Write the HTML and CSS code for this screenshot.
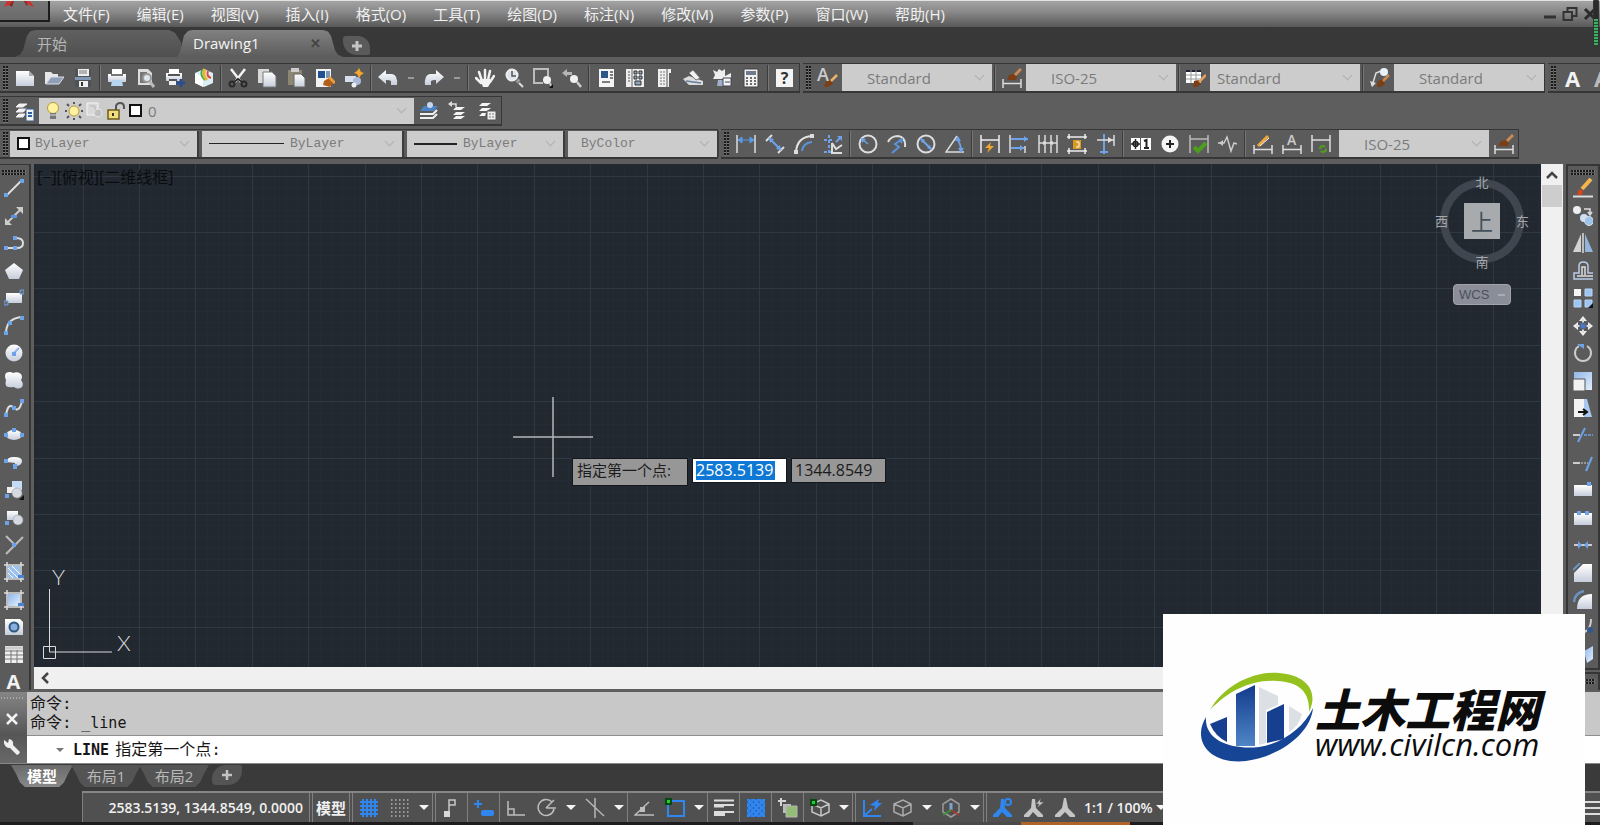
FILE: index.html
```html
<!DOCTYPE html>
<html lang="zh-CN">

<head>
    <meta charset="UTF-8">
    <meta name="viewport" content="width=device-width, initial-scale=1.0">
    <title>Drawing1</title>
    <link rel="stylesheet" href="styles.css">
</head>

<body>
    <!-- shared gradients -->
    <svg class="defs" width="0" height="0" aria-hidden="true">
        <linearGradient id="gw" x1="0" y1="0" x2="0" y2="1">
            <stop offset="0" stop-color="#ffffff" />
            <stop offset="1" stop-color="#c6cddb" />
        </linearGradient>
        <linearGradient id="gb" x1="0" y1="0" x2="1" y2="1">
            <stop offset="0" stop-color="#8fb6ea" />
            <stop offset="1" stop-color="#e3effc" />
        </linearGradient>
        <linearGradient id="tower" x1="0" y1="0" x2="0" y2="1">
            <stop offset="0" stop-color="#123a8c" />
            <stop offset="1" stop-color="#4f86c6" />
        </linearGradient>
    </svg>

    <header class="menu-bar">
        <button class="app-button" aria-label="应用程序菜单">
            <svg width="48" height="20" viewBox="0 0 48 20"><path d="M4 6L7 0H13L11 2L9 4ZM24 0H30L34 6L31 5Z" fill="#d0312d" /><path d="M9 4L13 0H14L12 6ZM24 0H26L28 5L26 4Z" fill="#8e2421" /></svg>
        </button>
        <nav class="menus">
            <a href="#">文件(F)</a>
            <a href="#">编辑(E)</a>
            <a href="#">视图(V)</a>
            <a href="#">插入(I)</a>
            <a href="#">格式(O)</a>
            <a href="#">工具(T)</a>
            <a href="#">绘图(D)</a>
            <a href="#">标注(N)</a>
            <a href="#">修改(M)</a>
            <a href="#">参数(P)</a>
            <a href="#">窗口(W)</a>
            <a href="#">帮助(H)</a>
        </nav>
        <div class="window-buttons">
            <button aria-label="最小化"><svg width="16" height="16" viewBox="0 0 16 16"><path d="M2 11H14" stroke="#333" stroke-width="3" /></svg></button>
            <button aria-label="还原"><svg width="16" height="16" viewBox="0 0 16 16"><path d="M1.500 6H10V14H1.500ZM5.500 6V2H14.500V10H10" fill="none" stroke="#333" stroke-width="2" /></svg></button>
            <button aria-label="关闭"><svg width="16" height="16" viewBox="0 0 16 16"><path d="M3 3L13 13M13 3L3 13" stroke="#2b2b2b" stroke-width="3" /></svg></button>
        </div>
        <div class="meter"></div>
    </header>

    <div class="file-tabs">
        <button class="file-tab">开始</button>
        <button class="file-tab active">Drawing1 <span class="close">✕</span></button>
        <button class="add-tab" aria-label="新图形"><svg width="12" height="12" viewBox="0 0 12 12"><path d="M6 1V11M1 6H11" stroke="#c4c4c4" stroke-width="3" /></svg></button>
    </div>

    <div class="toolbars">
        <div class="toolbar-row">
            <div class="toolbar">
                <span class="grip"></span>
                <button class="tool" aria-label="新建"><svg viewBox="0 0 20 20"><path d="M1 3H14L19 8V18H1Z" fill="url(#gw)" /><path d="M14 3V8H19" fill="#aaa" /></svg></button>
                <button class="tool" aria-label="打开"><svg viewBox="0 0 20 20"><path d="M1 4H7L9 6H14V9H7L2 16H1Z" fill="#e8e8e8" /><path d="M7 9H20L15 16H2Z" fill="#8fa0b4" stroke="#dde" /></svg></button>
                <button class="tool" aria-label="保存"><svg viewBox="0 0 20 20"><path d="M2 1H18V19H2Z" fill="#4d5258" /><path d="M5 1H16V8H5Z" fill="#eee" /><path d="M6 3H14M6 5H14" stroke="#777" /><path d="M2 9H18V12H2Z" fill="#8297b5" /><path d="M6 13H15V19H6Z" fill="#eee" /><path d="M8 14H10V18H8Z" fill="#333" /></svg></button>
                <span class="sep"></span>
                <button class="tool" aria-label="打印"><svg viewBox="0 0 20 20"><path d="M5 1H15V6H5Z" fill="#fff" /><path d="M1 6H19V14H1Z" fill="url(#gw)" /><path d="M4 7H16" stroke="#777" stroke-width="2" /><path d="M5 12H15L16 18H4Z" fill="#b5d6ee" /></svg></button>
                <button class="tool" aria-label="打印预览"><svg viewBox="0 0 20 20"><path d="M2 1H12L16 5V17H2Z" fill="#ddd" /><path d="M4 4H11V15H4Z" fill="#777" /><circle cx="11" cy="10" r="4" fill="#dfe6ee" stroke="#999" stroke-width="2" /><path d="M14 14L18 19" stroke="#bbb" stroke-width="3" /></svg></button>
                <button class="tool" aria-label="发布"><svg viewBox="0 0 20 20"><path d="M4 1H14V5H4Z" fill="#fff" /><path d="M1 5H17V13H1Z" fill="url(#gw)" /><path d="M3 7H15M4 12H12" stroke="#555" stroke-width="2" /><path d="M4 13H11V17H4Z" fill="#eee" /><path d="M16 11V19M11 15H20" stroke="#2c4d8e" stroke-width="3" /></svg></button>
                <button class="tool" aria-label="三维打印"><svg viewBox="0 0 20 20"><path d="M1 5L10 1L19 5V15L10 19L1 15Z" fill="#dceef6" /><path d="M1 5L9 9V19L1 15Z" fill="#fff" /><path d="M8 2Q6 8 11 12" fill="none" stroke="#3fae5a" stroke-width="2" /><path d="M11 1Q8 7 13 12" fill="none" stroke="#e5b832" stroke-width="3" /><path d="M14 3Q12 8 17 10" fill="none" stroke="#db4c3f" stroke-width="2" /></svg></button>
                <span class="sep"></span>
                <button class="tool" aria-label="剪切"><svg viewBox="0 0 20 20"><path d="M3 1L13 14M17 1L7 14" stroke="#f2f2f2" stroke-width="2.500" /><circle cx="4" cy="16" r="2.500" fill="none" stroke="#2a2a2a" stroke-width="2" /><circle cx="16" cy="16" r="2.500" fill="none" stroke="#2a2a2a" stroke-width="2" /><path d="M6 14L10 11L14 14" fill="none" stroke="#2a2a2a" stroke-width="2" /></svg></button>
                <button class="tool" aria-label="复制"><svg viewBox="0 0 20 20"><path d="M1 1H12V15H1Z" fill="#d9d9d9" /><path d="M6 4H15L19 8V19H6Z" fill="url(#gw)" stroke="#777" /></svg></button>
                <button class="tool" aria-label="粘贴"><svg viewBox="0 0 20 20"><path d="M2 2H16V17H2Z" fill="#8d8672" /><path d="M5 0H13V4H5Z" fill="#ccc" /><path d="M8 6H15L19 10V19H8Z" fill="url(#gw)" stroke="#666" /></svg></button>
                <button class="tool" aria-label="特性匹配"><svg viewBox="0 0 20 20"><path d="M1 1H16V19H1Z" fill="#f2f2f2" /><path d="M3 3H10V10H3Z" fill="#1f4f8f" /><path d="M11 3H15V10H11Z" fill="#7a97b8" /><path d="M9 13L14 10L19 14L15 19L8 17Z" fill="#b45d19" /><path d="M14 9L20 15" stroke="#e99f3d" stroke-width="3" /></svg></button>
                <button class="tool" aria-label="块编辑器"><svg viewBox="0 0 20 20"><path d="M1 8H12V14H1Z" fill="#d7dfee" /><circle cx="13" cy="13" r="4" fill="#aab9d8" /><circle cx="10" cy="17" r="2.500" fill="#eee" /><path d="M15 0L17 4L20 5L17 7L15 10L13 6L10 5L13 3Z" fill="#f4a82d" /></svg></button>
                <span class="sep"></span>
                <button class="tool" aria-label="放弃"><svg viewBox="0 0 20 20"><path d="M0 9L8 2V6H14Q20 7 19 17H13V13Q12 12 8 12V16Z" fill="url(#gw)" /></svg></button>
                <button class="drop" aria-label="放弃列表"></button>
                <button class="tool" aria-label="重做"><svg viewBox="0 0 20 20"><path d="M20 9L12 2V6H6Q0 7 1 17H7V13Q8 12 12 12V16Z" fill="url(#gw)" /></svg></button>
                <button class="drop" aria-label="重做列表"></button>
                <span class="sep"></span>
                <button class="tool" aria-label="平移"><svg viewBox="0 0 20 20"><path d="M7 13L4 4M10 12V2M13 12L15 3M15 14L19 8M6 15L1 10" stroke="#f2f2f2" stroke-width="2.500" stroke-linecap="round" /><path d="M5 11H15L16 14L13 19H8Z" fill="#f2f2f2" /></svg></button>
                <button class="tool" aria-label="实时缩放"><svg viewBox="0 0 20 20"><circle cx="8" cy="7" r="5.500" fill="#dce3ea" stroke="#eee" stroke-width="2" /><path d="M8 3V8H12" fill="none" stroke="#555" stroke-width="1.500" /><path d="M13 12L15 14" stroke="#999" stroke-width="4" /><path d="M15 15L19 19" stroke="#ddd" stroke-width="2" /></svg></button>
                <button class="tool" aria-label="窗口缩放"><svg viewBox="0 0 20 20"><path d="M10 15H1V1H15V8" fill="none" stroke="#bcbcbc" stroke-width="2" /><circle cx="14" cy="12" r="4" fill="#f0f0f0" /><path d="M17 15L18 18" stroke="#ccc" stroke-width="2" /><path d="M20 16V20H16Z" fill="#111" /></svg></button>
                <button class="tool" aria-label="缩放上一个"><svg viewBox="0 0 20 20"><path d="M0 5L5 1V4H10V7H5V9Z" fill="#b5b5b5" /><circle cx="12" cy="11" r="4" fill="#f0f0f0" /><path d="M15 14L19 19" stroke="#ccc" stroke-width="2.500" /></svg></button>
                <span class="sep"></span>
                <button class="tool" aria-label="特性"><svg viewBox="0 0 20 20"><path d="M3 1H18V19H3Z" fill="#f4f4f4" /><path d="M5 3H12V10H5Z" fill="#2d5688" /><path d="M14 4H17M14 7H17M14 10H17M6 14H14" stroke="#555" stroke-width="1.500" /></svg></button>
                <button class="tool" aria-label="设计中心"><svg viewBox="0 0 20 20"><path d="M1 1H19V19H1Z" fill="#eee" /><path d="M7 1V19" stroke="#666" /><path d="M3 4H5M3 7H5M3 10H5M3 13H5" stroke="#555" /><path d="M9 3H12V6H9ZM14 3H17V6H14ZM9 8H12V11H9ZM14 8H17V11H14ZM10 13H16V17H10Z" fill="#8fa3bf" stroke="#333" /></svg></button>
                <button class="tool" aria-label="工具选项板"><svg viewBox="0 0 20 20"><path d="M4 1H17V5H15V19H4Z" fill="#f0f0f0" /><path d="M13 1V19" stroke="#555" /><path d="M6 4H11M6 7H11M6 10H11M6 13H11M6 16H11" stroke="#777" stroke-dasharray="2 1" /></svg></button>
                <button class="tool" aria-label="图纸集"><svg viewBox="0 0 20 20"><path d="M0 11L6 8L20 13V17H6Z" fill="#dcdcdc" /><path d="M6 5L10 2L17 10L13 12Z" fill="#f4f4f4" stroke="#777" /><path d="M3 13L18 15" stroke="#667f9e" stroke-width="1.500" /></svg></button>
                <button class="tool" aria-label="标记集"><svg viewBox="0 0 20 20"><path d="M1 2L5 4L7 1L10 3L13 1V8L19 5V11H1L3 7Z" fill="#eee" /><path d="M6 12H11V18H5Z" fill="#9fb0c8" /><path d="M11 10H19V18H11Z" fill="#f4f4f4" stroke="#445" /><path d="M13 14H18" stroke="#445" /></svg></button>
                <button class="tool" aria-label="计算器"><svg viewBox="0 0 20 20"><path d="M3 1H17V19H3Z" fill="#f2f2f2" stroke="#444" /><path d="M5 3H15V7H5Z" fill="#6d7b8c" /><path d="M5 10H15M5 13H15M5 16H15" stroke="#444" stroke-width="1.500" stroke-dasharray="2 2" /></svg></button>
                <span class="sep"></span>
                <button class="tool help" aria-label="帮助"><span>?</span></button>
            </div>
            <div class="toolbar">
                <span class="grip"></span>
                <button class="tool letter-a" aria-label="文字样式"><span>A</span><svg viewBox="0 0 20 20"><path d="M6 19L8 13L13 12L15 16L10 19Z" fill="#7b3f17" /><path d="M13 13L19 7" stroke="#e8b36a" stroke-width="2.500" /></svg></button>
                <label class="combo style-combo"><select aria-label="文字样式列表"><option>Standard</option></select></label>
                <span class="sep"></span>
                <button class="tool" aria-label="标注样式"><svg viewBox="0 0 20 20"><path d="M1 11V20M19 11V20M1 15.500H19" stroke="#ddd" stroke-width="1.500" /><path d="M5 12L7 7L12 6L15 9L14 12Z" fill="#7b3f17" /><path d="M13 7L19 1" stroke="#c98a54" stroke-width="3" /></svg></button>
                <label class="combo style-combo"><select aria-label="标注样式列表"><option>ISO-25</option></select></label>
                <span class="sep"></span>
                <button class="tool" aria-label="表格样式"><svg viewBox="0 0 20 20"><path d="M0 2H15V15H0Z" fill="#fff" /><path d="M0 3H15" stroke="#223" stroke-width="2" /><path d="M0 7H15M0 11H15M5 2V15M10 2V15" stroke="#999" /><path d="M7 19L8 13L13 12L15 16L11 19Z" fill="#7b3f17" /><path d="M13 14L20 7" stroke="#e2a264" stroke-width="2.500" /></svg></button>
                <label class="combo style-combo near"><select aria-label="表格样式列表"><option>Standard</option></select></label>
                <span class="sep"></span>
                <button class="tool" aria-label="多重引线样式"><svg viewBox="0 0 20 20"><path d="M2 18L6 5L11 3" fill="none" stroke="#ddd" stroke-width="1.500" /><path d="M0 13L2 19L6 15Z" fill="#ddd" /><circle cx="14" cy="4" r="4" fill="#e8f2fa" /><path d="M7 19L8 13L13 11L15 16L11 19Z" fill="#7b3f17" /><path d="M13 13L19 7" stroke="#c98a54" stroke-width="2.500" /></svg></button>
                <label class="combo style-combo"><select aria-label="引线样式列表"><option>Standard</option></select></label>
            </div>
            <div class="toolbar clipped">
                <span class="grip"></span>
                <button class="tool big-a" aria-label="多行文字">A</button>
                <button class="tool big-a dim" aria-label="单行文字">A</button>
            </div>
        </div>

        <div class="toolbar-row">
            <div class="toolbar">
                <span class="grip"></span>
                <button class="tool" aria-label="图层特性"><svg viewBox="0 0 20 20"><path d="M4 3H12L8 6H1ZM4 8H12L8 11H1ZM4 13H10L8 16H1Z" fill="#f4f4f4" stroke="#eee" /><path d="M11 8H19V20H11Z" fill="#f2f2f2" stroke="#345c92" /><path d="M13 12H17M13 15H17" stroke="#2d5fa8" stroke-width="2" /></svg></button>
                <label class="combo layer-combo">
                    <svg viewBox="0 0 20 20"><circle cx="10" cy="7" r="5.500" fill="#fff3a0" stroke="#b79b2e" /><path d="M7 12H13V18H7Z" fill="#777" /><path d="M7 14H13" stroke="#ddd" /></svg>
                    <svg viewBox="0 0 20 20"><circle cx="10" cy="10" r="5" fill="#fff0a0" stroke="#b99a37" /><path d="M10 1V3M10 17V19M1 10H3M17 10H19M3 3L5 5M15 15L17 17M17 3L15 5M5 15L3 17" stroke="#555" stroke-width="2" /></svg>
                    <svg viewBox="0 0 20 20"><path d="M2 2H13V14H2Z" fill="#d8d8d8" stroke="#f4f4f4" /><circle cx="13" cy="12" r="4" fill="#c0c0c0" stroke="#e4e4e4" /><path d="M5 5H10V9" fill="none" stroke="#b4b4b4" /></svg>
                    <svg viewBox="0 0 20 20"><path d="M2 9H13V18H2Z" fill="#f2dc7c" stroke="#6d5c1d" stroke-width="1.500" /><path d="M10 9V5Q11 2 14 2Q18 2 18 6V8" fill="none" stroke="#555" stroke-width="2" /><path d="M7 12V15" stroke="#333" stroke-width="2" /></svg>
                    <span class="swatch"></span>
                    <select aria-label="图层"><option>0</option></select>
                </label>
                <button class="tool" aria-label="将对象的图层置为当前"><svg viewBox="0 0 20 20"><path d="M5 5H19L15 10H1Z" fill="#4b83c4" /><circle cx="11" cy="4" r="3" fill="#c8d8ec" /><path d="M1 13H14L18 9M1 17H14L18 13" fill="none" stroke="#f0f0f0" stroke-width="2" /></svg></button>
                <button class="tool" aria-label="上一个图层"><svg viewBox="0 0 20 20"><path d="M1 3H8V6" fill="none" stroke="#ddd" stroke-width="1.500" /><path d="M0 3L4 0V6Z" fill="#ddd" /><path d="M8 6H17L13 9H5ZM8 11H17L13 14H5ZM8 15H17L13 18H5Z" fill="#f4f4f4" /></svg></button>
                <button class="tool" aria-label="图层状态"><svg viewBox="0 0 20 20"><path d="M5 2H14L10 5H2ZM5 7H14L10 10H2ZM5 12H9L8 15H2Z" fill="#f4f4f4" /><path d="M10 10H19V19H10Z" fill="#eee" stroke="#555" /><path d="M12 13H17M12 16H17" stroke="#777" stroke-dasharray="2 1" /></svg></button>
            </div>
        </div>

        <div class="toolbar-row">
            <div class="toolbar prop-bar">
                <span class="grip"></span>
                <label class="combo mono color-combo"><span class="swatch"></span><select aria-label="颜色"><option>ByLayer</option></select></label>
                <label class="combo mono type-combo"><span class="line"></span><select aria-label="线型"><option>ByLayer</option></select></label>
                <label class="combo mono weight-combo"><span class="line thick"></span><select aria-label="线宽"><option>ByLayer</option></select></label>
                <label class="combo mono plot-combo"><select aria-label="打印样式"><option>ByColor</option></select></label>
            </div>
            <div class="toolbar dim-bar">
                <span class="grip"></span>
                <button class="tool" aria-label="线性"><svg viewBox="0 0 20 20"><path d="M1 1V19M19 1V19" stroke="#ddd" stroke-width="1.500" /><path d="M2 6H18M2 6L6 3V9ZM18 6L14 3V9Z" fill="#5b9be8" stroke="#5b9be8" /></svg></button>
                <button class="tool" aria-label="对齐"><svg viewBox="0 0 20 20"><path d="M1 7L7 1M13 19L19 13" stroke="#ddd" stroke-width="2" /><path d="M4 4L16 16" stroke="#6ea3ea" stroke-width="2" /><path d="M4 4L9 5L5 9ZM16 16L11 15L15 11Z" fill="#6ea3ea" /></svg></button>
                <button class="tool" aria-label="弧长"><svg viewBox="0 0 20 20"><path d="M2 18Q3 3 18 2" fill="none" stroke="#e5e5e5" stroke-width="2" /><path d="M8 17Q9 9 18 8" fill="none" stroke="#5b93e0" stroke-width="2" /><path d="M0 16H4V20H0ZM16 0H20V4H16Z" fill="#ddd" /></svg></button>
                <button class="tool" aria-label="坐标"><svg viewBox="0 0 20 20"><path d="M1 6H10M6 1V19M1 18H10" stroke="#6ea3ea" stroke-width="2" stroke-dasharray="3 2" /><path d="M9 9V19H19M9 9L13 15L19 11" fill="none" stroke="#ddd" stroke-width="2" /><path d="M14 2H19V7Z" fill="#6ea3ea" /><path d="M13 8L18 3" stroke="#6ea3ea" stroke-width="2" /></svg></button>
                <span class="sep"></span>
                <button class="tool" aria-label="半径"><svg viewBox="0 0 20 20"><circle cx="10" cy="10" r="8.500" fill="none" stroke="#ddd" stroke-width="2" /><path d="M10 10L4 5" stroke="#6ea3ea" stroke-width="1.500" /><path d="M3 4L8 5L4 9Z" fill="#6ea3ea" /></svg></button>
                <button class="tool" aria-label="折弯"><svg viewBox="0 0 20 20"><path d="M1 8Q4 2 11 2Q19 3 18 13" fill="none" stroke="#ddd" stroke-width="2" /><path d="M5 19L12 13L8 10L14 6" fill="none" stroke="#5b93e0" stroke-width="2" /><path d="M16 4L15 10L11 6Z" fill="#5b93e0" /></svg></button>
                <button class="tool" aria-label="直径"><svg viewBox="0 0 20 20"><circle cx="10" cy="10" r="8.500" fill="none" stroke="#ddd" stroke-width="2" /><path d="M5 5L15 15" stroke="#6ea3ea" stroke-width="2" /><path d="M4 4L9 6L6 9ZM16 16L11 14L14 11Z" fill="#6ea3ea" /></svg></button>
                <button class="tool" aria-label="角度"><svg viewBox="0 0 20 20"><path d="M12 2L1 18H19" fill="none" stroke="#ddd" stroke-width="1.500" /><path d="M12 5Q16 10 16 17" fill="none" stroke="#6ea3ea" stroke-width="2" /><path d="M10 7L13 2L16 7ZM13 14H19L16 19Z" fill="#6ea3ea" /></svg></button>
                <span class="sep"></span>
                <button class="tool" aria-label="快速标注"><svg viewBox="0 0 20 20"><path d="M1 1V19M19 1V19M1 6H19" stroke="#eee" stroke-width="1.500" /><path d="M11 8L5 14H9L7 19L14 12H10Z" fill="#f3a42c" /></svg></button>
                <button class="tool" aria-label="基线"><svg viewBox="0 0 20 20"><path d="M1 1V19M16 12V19" stroke="#ddd" stroke-width="1.500" /><path d="M2 5H19M2 14H15" stroke="#6ea3ea" stroke-width="2" /><path d="M19 5L15 2V8ZM15 14L11 11V17Z" fill="#6ea3ea" /></svg></button>
                <button class="tool" aria-label="连续"><svg viewBox="0 0 20 20"><path d="M1 1V19M7 1V19M13 1V19M19 1V19M1 9H19" stroke="#ddd" stroke-width="1.500" /><path d="M5 7L9 9L5 11ZM11 9L15 7V11Z" fill="#ddd" /></svg></button>
                <button class="tool" aria-label="等距标注"><svg viewBox="0 0 20 20"><path d="M0 3H20M0 17H20M2 0V5M18 0V5M2 14V20M18 14V20" stroke="#eee" stroke-width="1.500" /><path d="M6 6H14V15H6Z" fill="#d99a1e" /><path d="M9 8H12V13H9" fill="none" stroke="#fff" /></svg></button>
                <button class="tool" aria-label="折断标注"><svg viewBox="0 0 20 20"><path d="M8 0V20M4 18H12" stroke="#6ea3ea" stroke-width="2" /><path d="M1 6H18M18 1V12" stroke="#ddd" stroke-width="1.500" /><path d="M17 6L12 3V9Z" fill="#ddd" /></svg></button>
                <span class="sep"></span>
                <button class="tool" aria-label="公差"><svg viewBox="0 0 20 20"><path d="M0 4H9V16H0ZM10 4H20V16H10Z" fill="#fff" /><path d="M4.500 5V15M0 10H9M2 10A2.500 2.500 0 1 0 7 10A2.500 2.500 0 1 0 2 10" fill="none" stroke="#222" stroke-width="1.500" /><path d="M13 7L15.500 6V14M13 14H18" fill="none" stroke="#222" stroke-width="2" /></svg></button>
                <button class="tool" aria-label="圆心标记"><svg viewBox="0 0 20 20"><circle cx="10" cy="10" r="8.500" fill="#f4f4f4" /><path d="M10 6V14M6 10H14" stroke="#222" stroke-width="2" /></svg></button>
                <button class="tool" aria-label="检验"><svg viewBox="0 0 20 20"><path d="M1 1V19M19 1V19M1 5H19" stroke="#bbb" stroke-width="1.500" /><path d="M5 13L9 17L17 9" fill="none" stroke="#4d9e1c" stroke-width="4" /></svg></button>
                <button class="tool" aria-label="折弯线性"><svg viewBox="0 0 20 20"><path d="M0 9H6L9 3L13 17L16 9L19 10" fill="none" stroke="#ccc" stroke-width="1.500" /><path d="M1 9L5 6V12Z" fill="#ccc" /></svg></button>
                <span class="sep"></span>
                <button class="tool" aria-label="编辑标注"><svg viewBox="0 0 20 20"><path d="M1 11V20M19 11V20M1 15.500H19" stroke="#ddd" stroke-width="1.500" /><path d="M5 12L15 2" stroke="#f0a63c" stroke-width="3" /><path d="M7 12L16 4" stroke="#fff" /></svg></button>
                <button class="tool letter-dim" aria-label="编辑标注文字"><span>A</span><svg viewBox="0 0 20 20"><path d="M1 11V20M19 11V20M1 15.500H19" stroke="#ddd" stroke-width="1.500" /></svg></button>
                <button class="tool" aria-label="标注更新"><svg viewBox="0 0 20 20"><path d="M1 1V18M19 1V18M1 6H19" stroke="#ddd" stroke-width="1.500" /><circle cx="12" cy="15" r="3" fill="none" stroke="#4d9e1c" stroke-width="2" stroke-dasharray="7 2" /></svg></button>
                <label class="combo style-combo"><select aria-label="标注样式控制"><option>ISO-25</option></select></label>
                <button class="tool" aria-label="标注样式管理"><svg viewBox="0 0 20 20"><path d="M1 11V20M19 11V20M1 15.500H19" stroke="#ddd" stroke-width="1.500" /><path d="M4 12L7 7L12 6L15 9L14 12Z" fill="#7b3f17" /><path d="M13 7L19 1" stroke="#c98a54" stroke-width="3" /></svg></button>
            </div>
        </div>
    </div>

    <main class="workspace">
        <div class="side-bar draw-bar">
            <span class="grip-h"></span>
            <button class="tool" aria-label="直线"><svg viewBox="0 0 20 20"><path d="M3 17L17 3" stroke="#ddd" stroke-width="2" /><path d="M0 15H4V19H0ZM16 1H20V5H16Z" fill="#6ea3ea" /></svg></button>
            <button class="tool" aria-label="构造线"><svg viewBox="0 0 20 20"><path d="M3 17L17 3" stroke="#ccc" stroke-width="2" /><path d="M1 19V12L8 19ZM19 1H12L19 8Z" fill="#ccc" /><path d="M7 9H13V12H7Z" fill="#5b93e0" /></svg></button>
            <button class="tool" aria-label="多段线"><svg viewBox="0 0 20 20"><path d="M2 15H13Q19 15 19 10Q19 5 12 5" fill="none" stroke="#ddd" stroke-width="2" /><path d="M0 13H4V17H0ZM9 13H13V17H9ZM9 3H13V7H9Z" fill="#6ea3ea" /></svg></button>
            <button class="tool" aria-label="多边形"><svg viewBox="0 0 20 20"><path d="M10 2L19 9L15 18H5L1 9Z" fill="url(#gw)" /></svg></button>
            <button class="tool" aria-label="矩形"><svg viewBox="0 0 20 20"><path d="M2 5H18V15H2Z" fill="url(#gw)" /><path d="M0 13H4V17H0ZM16 2H20V6H16Z" fill="#6b6b6b" stroke="#6ea3ea" /></svg></button>
            <button class="tool" aria-label="圆弧"><svg viewBox="0 0 20 20"><path d="M2 17Q3 3 18 2" fill="none" stroke="#ddd" stroke-width="2" /><path d="M0 16H4V20H0ZM4 6H8V10H4ZM16 1H20V5H16Z" fill="#6ea3ea" /></svg></button>
            <button class="tool" aria-label="圆"><svg viewBox="0 0 20 20"><circle cx="10" cy="10" r="8.500" fill="url(#gw)" /><path d="M9 11L15 5" stroke="#8db6ee" stroke-width="2" /><path d="M8 9H12V13H8Z" fill="#6ea3ea" /></svg></button>
            <button class="tool" aria-label="修订云线"><svg viewBox="0 0 20 20"><path d="M2 3Q6 1 9 3Q14 1 17 4Q19 7 17 10Q20 14 18 17Q14 20 10 17Q5 18 2 16Q1 13 2 10Q0 6 2 3Z" fill="url(#gw)" /></svg></button>
            <button class="tool" aria-label="样条曲线"><svg viewBox="0 0 20 20"><path d="M2 17Q4 5 9 9Q15 16 18 3" fill="none" stroke="#ddd" stroke-width="2" /><path d="M0 15H4V19H0ZM8 8H12V12H8ZM16 1H20V5H16Z" fill="#6ea3ea" /></svg></button>
            <button class="tool" aria-label="椭圆"><svg viewBox="0 0 20 20"><ellipse cx="10" cy="10" rx="8" ry="5" fill="url(#gw)" /><path d="M0 8H4V12H0ZM16 8H20V12H16ZM8 3H12V7H8Z" fill="#6ea3ea" /></svg></button>
            <button class="tool" aria-label="椭圆弧"><svg viewBox="0 0 20 20"><path d="M2 10Q3 5 10 5Q18 5 18 9Q18 14 11 14V11Z" fill="url(#gw)" /><path d="M0 7H4V11H0ZM9 12H13V17H9Z" fill="#6ea3ea" /></svg></button>
            <button class="tool" aria-label="插入块"><svg viewBox="0 0 20 20"><path d="M8 1H18V10H8Z" fill="#c5daf4" /><path d="M3 7H11V13H3Z" fill="#eee" /><circle cx="13" cy="13" r="5" fill="#d6dae0" stroke="#8a93a2" stroke-width=".5" /><path d="M1 14H5V18H1Z" fill="#6ea3ea" /><path d="M20 15V20H15Z" fill="#111" /></svg></button>
            <button class="tool" aria-label="创建块"><svg viewBox="0 0 20 20"><path d="M3 4H14V13H3Z" fill="url(#gw)" /><circle cx="14" cy="13" r="5" fill="#d6dae0" stroke="#8a93a2" stroke-width=".5" /><path d="M1 14H5V18H1Z" fill="#6ea3ea" /></svg></button>
            <button class="tool" aria-label="点"><svg viewBox="0 0 20 20"><path d="M2 1L11 10M19 2L2 19" stroke="#bcbcbc" stroke-width="2" /><path d="M8 8H12V12H8Z" fill="#6ea3ea" /></svg></button>
            <button class="tool" aria-label="图案填充"><svg viewBox="0 0 20 20"><path d="M4 4H16V16H4Z" fill="#9cc2f0" /><path d="M4 6L14 16M4 11L9 16M8 4L16 12" stroke="#fff" /><path d="M0 3H20M0 17H20M3 0V20M17 0V20" stroke="#ddd" stroke-width="1.500" /><path d="M14 13H20V16H14Z" fill="#4b83d4" /></svg></button>
            <button class="tool" aria-label="渐变色"><svg viewBox="0 0 20 20"><path d="M4 4H16V16H4Z" fill="url(#gb)" /><path d="M0 3H20M0 17H20M3 0V20M17 0V20" stroke="#ddd" stroke-width="1.500" /><path d="M14 13H20V16H14Z" fill="#4b83d4" /></svg></button>
            <button class="tool" aria-label="面域"><svg viewBox="0 0 20 20"><path d="M1 2H16L19 5V18H1Z" fill="url(#gw)" /><circle cx="10" cy="10" r="4.500" fill="#87aede" stroke="#31577f" stroke-width="2" /></svg></button>
            <button class="tool" aria-label="表格"><svg viewBox="0 0 20 20"><path d="M1 2H19V19H1Z" fill="#eee" /><path d="M1 4H19" stroke="#ccc" stroke-width="3" /><path d="M1 7H19M1 11H19M1 15H19M7 6V19M13 6V19" stroke="#777" /></svg></button>
            <button class="tool big-a" aria-label="多行文字">A</button>
        </div>

        <div class="drawing">
            <div class="canvas">
                <svg class="grid" width="100%" height="100%" aria-hidden="true">
                    <pattern id="grid" x="105" y="68" width="282" height="282" patternUnits="userSpaceOnUse">
                        <path d="M11.500 0V282M23.500 0V282M34.500 0V282M45.500 0V282M68.500 0V282M79.500 0V282M90.500 0V282M102.500 0V282M124.500 0V282M135.500 0V282M147.500 0V282M158.500 0V282M181.500 0V282M192.500 0V282M203.500 0V282M215.500 0V282M237.500 0V282M248.500 0V282M260.500 0V282M271.500 0V282" stroke="#242b34" />
                        <path d="M0 11.500H282M0 23.500H282M0 34.500H282M0 45.500H282M0 68.500H282M0 79.500H282M0 90.500H282M0 102.500H282M0 124.500H282M0 135.500H282M0 147.500H282M0 158.500H282M0 181.500H282M0 192.500H282M0 203.500H282M0 215.500H282M0 237.500H282M0 248.500H282M0 260.500H282M0 271.500H282" stroke="#242b34" />
                        <path d="M.5 0V282M56.500 0V282M113.500 0V282M169.500 0V282M226.500 0V282M0 .5H282M0 56.500H282M0 113.500H282M0 169.500H282M0 226.500H282" stroke="#2f3943" />
                    </pattern>
                    <rect width="100%" height="100%" fill="url(#grid)" />
                </svg>
                <div class="view-label">[−][俯视][二维线框]</div>

                <svg class="ucs" width="110" height="110" viewBox="0 0 110 110">
                    <path d="M15.500 32V95H78M9.500 89.500H21.500V101.500H9.500Z" fill="none" stroke="#d8dade" stroke-width="1" />
                    <text x="18" y="28">Y</text>
                    <text x="83" y="94">X</text>
                </svg>

                <svg class="crosshair" width="82" height="82" viewBox="0 0 82 82"><path d="M41 1V81M1 41H81" stroke="#b3b7bb" stroke-width="1.500" /></svg>

                <div class="dynamic-input">
                    <label class="prompt" for="pointX">指定第一个点:</label>
                    <div class="field current"><input type="text" id="pointX" value="2583.5139"></div>
                    <div class="field"><input type="text" id="pointY" value="1344.8549" aria-label="Y 坐标"></div>
                </div>

                <div class="view-cube">
                    <span class="north">北</span>
                    <span class="west">西</span>
                    <button class="face">上</button>
                    <span class="east">东</span>
                    <span class="south">南</span>
                </div>
                <button class="wcs">WCS<span></span></button>
            </div>
            <div class="scroll-y">
                <button aria-label="向上滚动"><svg width="12" height="8" viewBox="0 0 12 8"><path d="M1 7L6 2L11 7" fill="none" stroke="#444" stroke-width="2.500" /></svg></button>
                <span class="thumb"></span>
            </div>
            <div class="scroll-x">
                <button aria-label="向左滚动"><svg width="8" height="12" viewBox="0 0 8 12"><path d="M7 1L2 6L7 11" fill="none" stroke="#444" stroke-width="2.500" /></svg></button>
            </div>
        </div>

        <div class="right-bars">
            <div class="side-bar modify-bar">
                <span class="grip-h"></span>
                <button class="tool" aria-label="删除"><svg viewBox="0 0 20 20"><path d="M0 18.500H20" stroke="#ddd" stroke-width="2" /><path d="M9 11L18 1" stroke="#f3b64a" stroke-width="4" /><path d="M4 17L6 11L10 13L9 17Z" fill="#d9441e" /></svg></button>
                <button class="tool" aria-label="复制对象"><svg viewBox="0 0 20 20"><circle cx="4" cy="4" r="4" fill="#eee" /><circle cx="11" cy="12" r="4" fill="#cfe0f5" /><circle cx="16" cy="15" r="4.500" fill="#9fc3ef" stroke="#ddd" /><path d="M11 3H17V7M15 6L17 9L19 6" fill="none" stroke="#ddd" stroke-width="1.500" /></svg></button>
                <button class="tool" aria-label="镜像"><svg viewBox="0 0 20 20"><path d="M0 19L8 1V19Z" fill="#d2d2d2" /><path d="M20 19L12 1V19Z" fill="#94b4dc" /><path d="M10 0V20" stroke="#ddd" stroke-width="1.500" /></svg></button>
                <button class="tool" aria-label="偏移"><svg viewBox="0 0 20 20"><path d="M20 18H1V12H6V5Q6 1 10 1Q15 1 15 5V12H20" fill="none" stroke="#b9cdea" stroke-width="1.500" /><path d="M20 15H4M9 14V6H12V14" fill="none" stroke="#ddd" stroke-width="1.500" /></svg></button>
                <button class="tool" aria-label="阵列"><svg viewBox="0 0 20 20"><path d="M1 1H8V8H1Z" fill="#f4f4f4" /><path d="M12 1H19V8H12ZM1 12H8V19H1ZM12 12H19V19H12Z" fill="#9cc5f2" stroke="#b8d4f4" /><path d="M20 15V20H15Z" fill="#111" /></svg></button>
                <button class="tool" aria-label="移动"><svg viewBox="0 0 20 20"><path d="M10 0L14 5H6ZM10 20L14 15H6ZM0 10L5 6V14ZM20 10L15 6V14Z" fill="#eee" /><path d="M10 3V17M3 10H17" stroke="#ddd" stroke-width="2" /><path d="M7 7H13V13H7Z" fill="#4b78c8" stroke="#555" /></svg></button>
                <button class="tool" aria-label="旋转"><svg viewBox="0 0 20 20"><path d="M14 3A8 8 0 1 1 6 3" fill="none" stroke="#ccc" stroke-width="2" /><path d="M4 1H11V6Z" fill="#6ea3ea" /></svg></button>
                <button class="tool" aria-label="缩放"><svg viewBox="0 0 20 20"><path d="M1 1H19V19H1Z" fill="url(#gb)" /><path d="M0 8H12V20H0Z" fill="#f2f2f2" stroke="#555" /></svg></button>
                <button class="tool" aria-label="拉伸"><svg viewBox="0 0 20 20"><path d="M11 1H14L19 19H11Z" fill="#a9c8ee" /><path d="M1 1H11V19H1Z" fill="#f4f4f4" /><path d="M5 14H13M10 11L14 14L10 17" fill="none" stroke="#111" stroke-width="2" /></svg></button>
                <button class="tool" aria-label="修剪"><svg viewBox="0 0 20 20"><path d="M0 10H7" stroke="#ccc" stroke-width="2" /><path d="M11 10H20" stroke="#6b8fc4" stroke-width="2" stroke-dasharray="3 1" /><path d="M5 17L12 3" stroke="#6ea3ea" stroke-width="2" /></svg></button>
                <button class="tool" aria-label="延伸"><svg viewBox="0 0 20 20"><path d="M0 10H7" stroke="#ccc" stroke-width="2" /><path d="M8 10H15" stroke="#aaa" stroke-width="1.500" stroke-dasharray="2 1" /><path d="M13 18L19 4" stroke="#6ea3ea" stroke-width="2" /></svg></button>
                <button class="tool" aria-label="打断于点"><svg viewBox="0 0 20 20"><path d="M1 5H19V16H1Z" fill="url(#gw)" /><path d="M14 2H18V6H14Z" fill="#6ea3ea" /></svg></button>
                <button class="tool" aria-label="打断"><svg viewBox="0 0 20 20"><path d="M1 5H19V17H1Z" fill="url(#gw)" /><path d="M4 3H8V7H4ZM12 3H16V7H12Z" fill="#6ea3ea" /></svg></button>
                <button class="tool" aria-label="合并"><svg viewBox="0 0 20 20"><path d="M1 10H19" stroke="#ccc" stroke-width="2" /><path d="M9 10L5 6V14ZM11 10L15 6V14Z" fill="#6ea3ea" /></svg></button>
                <button class="tool" aria-label="倒角"><svg viewBox="0 0 20 20"><path d="M1 19V10L10 1H19V19Z" fill="url(#gw)" /><path d="M0 7L7 0" stroke="#6c93c6" stroke-width="2" /></svg></button>
                <button class="tool" aria-label="圆角"><svg viewBox="0 0 20 20"><path d="M4 19Q4 4 19 4V19Z" fill="url(#gw)" /><path d="M1 12Q2 3 11 1" fill="none" stroke="#6c93c6" stroke-width="2.500" /></svg></button>
                <button class="tool" aria-label="光顺曲线"><svg viewBox="0 0 20 20"><path d="M2 16Q18 18 18 2" fill="none" stroke="#ccc" stroke-width="2" /><circle cx="17" cy="13" r="3" fill="#31578f" /></svg></button>
                <button class="tool" aria-label="分解"><svg viewBox="0 0 20 20"><path d="M11 6L20 1V14L14 18Z" fill="url(#gb)" /><path d="M2 4H12V15H2Z" fill="#d5e3f6" /></svg></button>
            </div>
            <div class="side-bar next-bar"><span class="grip-h"></span></div>
        </div>
    </main>

    <section class="command">
        <div class="command-handle">
            <span class="dots"></span>
            <button aria-label="关闭命令行"><svg width="12" height="12" viewBox="0 0 12 12"><path d="M1 1L11 11M11 1L1 11" stroke="#f2f2f2" stroke-width="2.500" /></svg></button>
            <button aria-label="自定义"><svg width="18" height="18" viewBox="0 0 18 18"><path d="M1 2L5 5L6 1Q11 2 10 7L17 14Q16 17 14 17L7 10Q2 10 1 5Z" fill="#efefef" /></svg></button>
        </div>
        <div class="command-body">
            <div class="history">
                <div>命令:</div>
                <div>命令: <span class="latin">_line</span></div>
            </div>
            <div class="command-line">
                <button class="recent" aria-label="最近使用的命令"></button>
                <label for="commandInput"><b class="latin">LINE</b>指定第一个点:</label>
                <input type="text" id="commandInput">
            </div>
        </div>
    </section>

    <div class="layout-tabs">
        <button class="layout-tab active">模型</button>
        <button class="layout-tab">布局1</button>
        <button class="layout-tab">布局2</button>
        <button class="layout-tab add" aria-label="新建布局"><svg width="12" height="12" viewBox="0 0 12 12"><path d="M6 1V11M1 6H11" stroke="#c4c4c4" stroke-width="2.500" /></svg></button>
    </div>

    <footer class="status-bar">
        <div class="status-group coords">2583.5139, 1344.8549, 0.0000</div>
        <div class="status-group"><button class="model">模型</button></div>
        <div class="status-group">
            <button class="stat" aria-label="栅格"><svg viewBox="0 0 20 20"><path d="M1 4H19M1 8H19M1 12H19M1 16H19M4 1V19M8 1V19M12 1V19M16 1V19" stroke="#2f86ef" stroke-width="2" /></svg></button>
            <button class="stat" aria-label="捕捉"><svg viewBox="0 0 20 20"><path d="M1 2H19M1 6H19M1 10H19M1 14H19M1 18H19" stroke="#b5b5b5" stroke-width="1.500" stroke-dasharray="1.500 2.500" /></svg></button>
            <button class="stat-drop" aria-label="捕捉选项"></button>
        </div>
        <div class="status-group">
            <button class="stat" aria-label="推断约束"><svg viewBox="0 0 20 20"><path d="M2 13H8V19H2Z" fill="#d8d8d8" /><path d="M7 13V2H13V7H7" fill="none" stroke="#c8c8c8" stroke-width="1.500" /></svg></button>
            <button class="stat div" aria-label="动态输入"><svg viewBox="0 0 20 20"><path d="M4 2V10M0 6H8" stroke="#2f86ef" stroke-width="2" /><rect x="7" y="12" width="13" height="6" rx="2" fill="#2f86ef" /></svg></button>
            <button class="stat div" aria-label="正交"><svg viewBox="0 0 20 20"><path d="M2 3V17H19M2 11H8V17" fill="none" stroke="#bdbdbd" stroke-width="1.500" /></svg></button>
            <button class="stat" aria-label="极轴追踪"><svg viewBox="0 0 20 20"><path d="M15 4A8 8 0 1 0 17 11M9 10H19M9 10L17 2" fill="none" stroke="#bdbdbd" stroke-width="1.500" /></svg></button>
            <button class="stat-drop" aria-label="极轴选项"></button>
            <button class="stat" aria-label="等轴测草图"><svg viewBox="0 0 20 20"><path d="M1 1L19 18M10 0V20" stroke="#b5b5b5" stroke-width="1.500" /></svg></button>
            <button class="stat-drop" aria-label="等轴测选项"></button>
            <button class="stat div" aria-label="对象捕捉追踪"><svg viewBox="0 0 20 20"><path d="M15 4L1 17H20" fill="none" stroke="#bdbdbd" stroke-width="1.500" /><path d="M6 9H11V14H6Z" fill="#bdbdbd" /></svg></button>
            <button class="stat" aria-label="对象捕捉"><svg viewBox="0 0 20 20"><path d="M3 3H19V18H3Z" fill="none" stroke="#2f86ef" stroke-width="2" /><path d="M0 0H7V7H0Z" fill="#064a12" /><path d="M2 2H5V5H2Z" fill="#1fd12d" /></svg></button>
            <button class="stat-drop" aria-label="捕捉模式"></button>
            <button class="stat div" aria-label="线宽显示"><svg viewBox="0 0 20 20"><path d="M0 2.500H20M0 7H20" stroke="#ddd" stroke-width="2" /><path d="M0 8H10" stroke="#ddd" stroke-width="3" /><path d="M0 15.500H11" stroke="#ddd" stroke-width="5" /><path d="M10 14H20" stroke="#ddd" stroke-width="2" /></svg></button>
            <button class="stat div" aria-label="透明度"><svg viewBox="0 0 20 20"><path d="M1 1H19V19H1Z" fill="#2f86ef" /><path d="M1 4L4 1M1 10L10 1M1 16L16 1M4 19L19 4M10 19L19 10M1 10L10 19M1 4L16 19M4 1L19 16M10 1L19 10" stroke="#2565b5" stroke-dasharray="2 2" /></svg></button>
            <button class="stat div" aria-label="选择循环"><svg viewBox="0 0 20 20"><path d="M3 0V8M0 3H8" stroke="#d5d5d5" stroke-width="2" /><path d="M5 6H13V15H5Z" fill="#bbb" /><path d="M8 8H19V19H8Z" fill="#94bd78" stroke="#b5b5b5" /></svg></button>
            <button class="stat div" aria-label="三维对象捕捉"><svg viewBox="0 0 20 20"><path d="M2 6L11 2L19 6V14L11 18L2 14ZM2 6L11 10L19 6M11 10V18" fill="none" stroke="#c5c5c5" stroke-width="1.500" /><path d="M0 1H7V8H0Z" fill="#064a12" /><path d="M2 3H5V6H2Z" fill="#1fd12d" /></svg></button>
            <button class="stat-drop" aria-label="三维捕捉选项"></button>
        </div>
        <div class="status-group">
            <button class="stat" aria-label="动态 UCS"><svg viewBox="0 0 20 20"><path d="M2 2V18H19M2 18L10 11" fill="none" stroke="#2f86ef" stroke-width="2" /><path d="M8 7L17 1L16 5H20L12 13L13 8Z" fill="#2f86ef" /></svg></button>
            <button class="stat" aria-label="选择过滤"><svg viewBox="0 0 20 20"><path d="M1 6L10 2L18 6V14L10 18L1 14ZM1 6L10 10L18 6M10 10V18" fill="none" stroke="#ababab" stroke-width="1.500" /></svg></button>
            <button class="stat-drop" aria-label="过滤选项"></button>
            <button class="stat" aria-label="小控件"><svg viewBox="0 0 20 20"><path d="M10 1L18 6V14L10 19L2 14V6Z" fill="none" stroke="#999" stroke-width="1.500" /><path d="M10 5V12" stroke="#7da3cf" stroke-width="3" /><path d="M10 12L18 17" stroke="#a83a32" stroke-width="1.500" /><path d="M10 12L2 17" stroke="#3d8f3a" stroke-width="1.500" /></svg></button>
            <button class="stat-drop" aria-label="小控件选项"></button>
        </div>
        <div class="status-group">
            <button class="stat" aria-label="注释可见性"><svg viewBox="0 0 20 20"><path d="M8 1H11L12 10L19 17V19H14L9 14L5 19H0V17L7 10Z" fill="#2f86ef" /><circle cx="15" cy="4" r="3" fill="none" stroke="#2f86ef" stroke-width="2" /></svg></button>
            <button class="stat" aria-label="自动缩放"><svg viewBox="0 0 20 20"><path d="M8 1H11L12 10L19 17V19H14L9 14L5 19H0V17L7 10Z" fill="#c5c5c5" /><path d="M17 0L12 6H15L13 10L20 4H16Z" fill="#c5c5c5" stroke="#505050" stroke-width=".5" /></svg></button>
            <button class="stat" aria-label="注释比例图标"><svg viewBox="0 0 20 20"><path d="M9 0H11L13 10L20 17V19H15L10 14L5 19H0V17L7 10Z" fill="#c5c5c5" /></svg></button>
            <button class="scale">1:1 / 100%</button>
            <button class="stat-drop" aria-label="比例列表"></button>
        </div>
        <button class="stat customize" aria-label="自定义状态栏"><svg viewBox="0 0 20 20"><path d="M0 4H20M0 10H20M0 16H20" stroke="#ddd" stroke-width="2" /></svg></button>
    </footer>
    <div class="bottom-edge"></div>

    <a class="site-logo" href="#">
        <svg width="116" height="96" viewBox="0 0 116 96">
            <path d="M9 40C24 14 54 1 78 3C106 5 118 22 108 42C109 22 98 12 76 11C50 9 26 22 9 40Z" fill="#95c11f" />
            <path d="M35 24L54 15V76H35Z" fill="url(#tower)" />
            <path d="M58 17L77 26V35L65 40V73L58 75Z" fill="#dcdfe4" />
            <path d="M66 42L83 34V69L66 73Z" fill="#16408f" />
            <path d="M88 36L101 44Q98 56 88 62Z" fill="#dcdfe4" />
            <path d="M9 54L26 47V72Q14 66 9 54Z" fill="#16408f" />
            <path d="M5 47C3 72 33 80 58 77C83 73 103 57 112 38C110 62 81 86 45 91C10 95 -10 72 5 47Z" fill="#174596" />
        </svg>
        <span class="site-name"><strong>土木工程网</strong><em>www.civilcn.com</em></span>
    </a>
</body>

</html>
```
FILE: styles.css
```css
:root {
    --bar: #5b5b5b;
    --edge: #363636;
    --combo: #cccccc;
}

* {
    box-sizing: border-box;
}

body {
    margin: 0;
    height: 100vh;
    display: flex;
    flex-direction: column;
    overflow: hidden;
    background: #3a3a3a;
    color: #f0f0f0;
    font-family: "Open Sans", "Noto Sans CJK SC", sans-serif;
    font-size: 15px;
}

button,
input,
select {
    margin: 0;
    padding: 0;
    border: none;
    background: none;
    color: inherit;
    font: inherit;
}

svg {
    display: block;
    flex: none;
}

a {
    color: inherit;
    text-decoration: none;
}

.defs {
    position: absolute;
}

/* menu */
.menu-bar {
    flex: none;
    height: 27px;
    display: flex;
    align-items: center;
    background: linear-gradient(#a3a3a3, #8a8a8a 40%, #585858);
    border-top: 1px solid #dfe5de;
}

.app-button {
    align-self: flex-start;
    width: 50px;
    height: 21px;
    background: linear-gradient(#777, #6a6a6a);
    border-right: 2px solid #1c1c1c;
    border-bottom: 2px solid #1c1c1c;
    overflow: hidden;
}

.menus {
    display: flex;
    gap: 27px;
    margin-left: 13px;
    line-height: 24px;
    white-space: nowrap;
}

.window-buttons {
    display: flex;
    gap: 4px;
    margin-left: auto;
    margin-right: 2px;
}

.meter {
    position: absolute;
    top: 0;
    right: 1px;
    width: 6px;
    height: 47px;
    border: 1px solid #333;
    border-radius: 0 0 3px 3px;
    background: linear-gradient(#2b2b2b 18px, transparent 18px), repeating-linear-gradient(#3fae62 0 2px, #1f4f2d 2px 3px);
}

/* file tabs */
.file-tabs {
    flex: none;
    height: 30px;
    display: flex;
    align-items: flex-end;
    padding-left: 15px;
    background: #383838;
}

.file-tab {
    width: 166px;
    height: 27px;
    padding: 0 22px 1px;
    display: flex;
    align-items: center;
    justify-content: space-between;
    background: linear-gradient(#606060, #505050);
    color: #b5b5b5;
    clip-path: polygon(0 100%, 5px 92%, 8px 75%, 12px 22%, 15px 6%, 20px 0, calc(100% - 12px) 0, calc(100% - 6px) 10%, 100% 45%, 100% 100%);
}

.file-tab.active {
    margin-left: -4px;
    padding-left: 16px;
    background: linear-gradient(#818181, #5c5c5c);
    color: #f4f4f4;
    clip-path: polygon(0 100%, 3px 80%, 7px 20%, 11px 4%, 15px 0, calc(100% - 20px) 0, calc(100% - 15px) 6%, calc(100% - 12px) 22%, calc(100% - 8px) 75%, calc(100% - 5px) 92%, 100% 100%);
}

.file-tab .close {
    color: #444;
    font-size: 13px;
    font-weight: bold;
}

.add-tab {
    width: 27px;
    height: 19px;
    margin: 0 0 2px;
    display: flex;
    align-items: center;
    justify-content: center;
    background: #5a5a5a;
    border-radius: 3px 12px 2px 14px;
}

/* toolbars */
.toolbars {
    flex: none;
    display: flex;
    flex-direction: column;
    gap: 3px;
    padding: 6px 0 5px;
    background: #5e5e5e;
    overflow: hidden;
}

.toolbar-row {
    display: flex;
    gap: 3px;
    height: 30px;
}

.toolbar {
    flex: none;
    display: flex;
    align-items: center;
    background: var(--bar);
    border: 1px solid var(--edge);
    border-width: 1px 1px 2px 0;
}

.toolbar.clipped {
    flex: 1 1 0;
    min-width: 0;
    overflow: hidden;
    border-right: none;
}

.grip {
    flex: none;
    width: 6px;
    height: 24px;
    margin: 0 2px;
    background: repeating-linear-gradient(90deg, #5b5b5b 0 1px, transparent 1px 3px), repeating-linear-gradient(#1a1a1a 0 2px, #777 2px 3px);
}

.grip-h {
    flex: none;
    width: 24px;
    height: 6px;
    margin-bottom: -6px;
    background: repeating-linear-gradient(#5b5b5b 0 1px, transparent 1px 3px), repeating-linear-gradient(90deg, #1a1a1a 0 2px, #777 2px 3px);
}

.tool {
    position: relative;
    flex: none;
    width: 29px;
    height: 26px;
    display: flex;
    align-items: center;
    justify-content: center;
}

.tool svg,
.stat svg,
.layer-combo svg {
    width: 20px;
    height: 20px;
}

.sep {
    flex: none;
    width: 5px;
    height: 26px;
    background: linear-gradient(90deg, transparent 2px, #3c3c3c 2px 3px, #777 3px 4px, transparent 4px);
}

.dim-bar .sep {
    width: 6px;
}

.drop {
    width: 17px;
    height: 26px;
}

.drop::before {
    content: "";
    display: block;
    width: 6px;
    height: 2px;
    margin: auto;
    background: #999;
}

.help span {
    width: 17px;
    height: 18px;
    background: #f4f4f4;
    color: #333;
    font-size: 16px;
    font-weight: bold;
    line-height: 18px;
}

.letter-a span,
.letter-dim span {
    position: absolute;
    top: -1px;
    left: 4px;
    font-size: 18px;
    font-weight: 600;
    line-height: 20px;
    color: #ccc;
}

.letter-dim span {
    top: 0;
    left: 10px;
    font-size: 14px;
    line-height: 18px;
}

.big-a {
    font-size: 22px;
    font-weight: bold;
    line-height: 22px;
    color: #f2f2f2;
}

.big-a.dim {
    color: #bbb;
}

.combo {
    position: relative;
    flex: none;
    height: 27px;
    display: flex;
    align-items: center;
    background: var(--combo);
    color: #7b7b7b;
}

.combo select {
    flex: 1;
    min-width: 0;
    height: 26px;
    appearance: none;
    outline: none;
}

/* drop-down arrow */
.combo::after {
    content: "";
    width: 6px;
    height: 6px;
    margin: 0 9px 4px 0;
    border: solid #b0b0b0;
    border-width: 0 1px 1px 0;
    transform: rotate(45deg);
    pointer-events: none;
}

.style-combo {
    width: 150px;
    padding-left: 25px;
}

.style-combo.near {
    padding-left: 7px;
}

.dim-bar .style-combo {
    margin-left: 4px;
}

.layer-combo {
    width: 375px;
    height: 26px;
    padding-left: 4px;
    gap: 1px;
}

.layer-combo .swatch {
    margin: 0 5px 0 2px;
}

.swatch {
    flex: none;
    width: 13px;
    height: 13px;
    background: #fff;
    border: 2px solid #111;
}

.prop-bar {
    gap: 5px;
}

.prop-bar .grip {
    margin-right: -3px;
}

.mono {
    height: 26px;
    font-family: "Liberation Mono", monospace;
    font-size: 13px;
    box-shadow: 2px 0 0 #3c3c3c;
}

.mono .line {
    flex: none;
    width: 75px;
    height: 1px;
    margin-right: 6px;
    background: #222;
}

.mono .line.thick {
    width: 43px;
    height: 2px;
}

.color-combo {
    width: 187px;
    padding-left: 7px;
    gap: 5px;
}

.type-combo {
    width: 200px;
    padding-left: 7px;
}

.weight-combo {
    width: 156px;
    padding-left: 7px;
}

.plot-combo {
    width: 149px;
    padding-left: 13px;
}

/* workspace */
.workspace {
    flex: 1;
    min-height: 0;
    display: flex;
    background: #5e5e5e;
}

.side-bar {
    display: flex;
    flex-direction: column;
    align-items: center;
    justify-content: space-between;
    background: var(--bar);
    border: 2px solid var(--edge);
}

.side-bar .tool {
    height: 16px;
}

.side-bar .big-a {
    font-size: 20px;
    line-height: 16px;
}

.draw-bar {
    width: 31px;
    margin-right: 3px;
    padding: 4px 2px 0 0;
    border-width: 1px 2px 0 0;
}

.right-bars {
    width: 34px;
    margin-left: 3px;
    display: flex;
    flex-direction: column;
    gap: 2px;
}

.modify-bar {
    flex: 1;
    padding: 3px 1px 5px 0;
}

.next-bar {
    height: 18px;
    padding-top: 4px;
    border-bottom: none;
}

.drawing {
    flex: 1;
    min-width: 0;
    display: grid;
    grid-template-columns: 1fr 22px;
    grid-template-rows: 1fr 22px;
    margin-bottom: 1px;
}

.canvas {
    position: relative;
    overflow: hidden;
    background: #212830;
}

.grid {
    position: absolute;
    inset: 0;
}

.view-label {
    position: absolute;
    top: 2px;
    left: 3px;
    color: #0a0d10;
    font-size: 16px;
    line-height: 22px;
}

.ucs {
    position: absolute;
    left: 0;
    bottom: 0;
}

.ucs text {
    fill: #d8dade;
    font-family: Lato, sans-serif;
    font-size: 22px;
    font-weight: 300;
}

.crosshair {
    position: absolute;
    left: 478px;
    top: 232px;
}

.dynamic-input {
    position: absolute;
    left: 538px;
    top: 294px;
    display: flex;
    align-items: flex-start;
    gap: 4px;
    color: #1c1c1c;
}

.prompt {
    width: 116px;
    height: 28px;
    padding-left: 4px;
    line-height: 23px;
    background: #979797;
    border: 1px solid #14181c;
}

.field {
    width: 95px;
    height: 25px;
    padding: 2px 3px;
    background: #979797;
    border: 1px solid #14181c;
}

.field input {
    display: block;
    width: 79px;
    height: 19px;
    font-size: 16px;
    line-height: 19px;
    outline: none;
}

.field.current {
    background: #fff;
}

.field.current input {
    background: #0f78d4;
    color: #fff;
}

.view-cube {
    position: absolute;
    top: 15px;
    right: 17px;
    width: 84px;
    height: 84px;
    border: 8px solid #3f464f;
    border-radius: 50%;
    display: flex;
    align-items: center;
    justify-content: center;
    color: #a4a8ac;
    font-size: 13px;
    line-height: 16px;
}

.view-cube span {
    position: absolute;
}

.north {
    top: -13px;
}

.south {
    bottom: -15px;
}

.west {
    left: -13px;
}

.east {
    right: -13px;
}

.face {
    width: 36px;
    height: 36px;
    background: #a7abae;
    color: #44505b;
    font-size: 22px;
    line-height: 32px;
}

.wcs {
    position: absolute;
    top: 120px;
    right: 30px;
    width: 58px;
    height: 21px;
    padding-left: 5px;
    display: flex;
    align-items: center;
    gap: 9px;
    background: #8b8e99;
    border: 1px solid #a0a3ac;
    border-radius: 4px;
    color: #4d515b;
    font-family: "Liberation Sans", sans-serif;
    font-size: 13px;
}

.wcs span {
    width: 7px;
    height: 2px;
    background: #a9acb5;
}

.scroll-y,
.scroll-x {
    background: #f0f0f0;
}

.scroll-x {
    grid-column: 1 / 3;
}

.scroll-y button,
.scroll-x button {
    width: 22px;
    height: 21px;
    display: flex;
    align-items: center;
    justify-content: center;
}

.scroll-y .thumb {
    display: block;
    width: 20px;
    height: 22px;
    margin: 0 auto;
    background: #cdcdcd;
}

/* command window */
.command {
    flex: none;
    display: flex;
    border-top: 2px solid #5e5e5e;
    border-bottom: 1px solid #888;
    color: #161616;
    font-family: "DejaVu Sans Mono", "Noto Sans CJK SC", monospace;
    font-size: 16px;
}

.command-handle {
    width: 27px;
    display: flex;
    flex-direction: column;
    align-items: center;
    gap: 13px;
    padding: 5px 3px 0 0;
    background: linear-gradient(#858585, #565656 60%, #686868);
}

.dots {
    width: 22px;
    height: 2px;
    margin-bottom: 1px;
    background: repeating-linear-gradient(90deg, #aaa 0 1px, transparent 1px 3px);
}

.command-body {
    flex: 1;
}

.history {
    height: 44px;
    padding: 2px 3px;
    background: #c8c8c8;
    border-bottom: 1px solid #8e8e8e;
    line-height: 19px;
}

.latin {
    font-size: 15px;
}

.command-line {
    height: 27px;
    display: flex;
    align-items: center;
    background: #fff;
}

.recent {
    width: 46px;
    height: 27px;
    padding-left: 29px;
}

.recent::before {
    content: "";
    display: block;
    border: 4px solid transparent;
    border-top-color: #777;
    border-bottom: none;
    width: 0;
}

.command-line label {
    line-height: 26px;
}

.command-line b {
    margin-right: 6px;
}

.command-line input {
    flex: 1;
    outline: none;
}

/* layout tabs */
.layout-tabs {
    flex: none;
    height: 27px;
    display: flex;
    align-items: flex-start;
    padding: 1px 0 0 11px;
}

.layout-tab {
    width: 70px;
    height: 22px;
    margin-right: -2px;
    padding-bottom: 2px;
    display: flex;
    align-items: center;
    justify-content: center;
    background: #545454;
    color: #b9b9b9;
    clip-path: polygon(0 0, 100% 0, calc(100% - 5px) 40%, calc(100% - 9px) 80%, calc(100% - 14px) 100%, 14px 100%, 9px 80%, 5px 40%);
}

.layout-tab.active {
    width: 62px;
    background: linear-gradient(#6a6a6a, #888);
    color: #fff;
    font-weight: bold;
}

.layout-tab.add {
    width: 30px;
    height: 20px;
    margin-left: 5px;
    padding-bottom: 0;
    clip-path: none;
    border-radius: 14px 2px 14px 4px;
}

/* status bar */
.status-bar {
    flex: none;
    height: 31px;
    display: flex;
    margin-left: 82px;
    background: #505050;
    border-top: 2px solid #868686;
    font-size: 14px;
    font-weight: 600;
    white-space: nowrap;
}

.status-group {
    display: flex;
    align-items: center;
    margin-right: 2px;
    border: 1px solid #808080;
    border-width: 0 1px;
}

.status-group.coords {
    width: 228px;
    justify-content: flex-end;
    padding-right: 6px;
}

.model {
    width: 36px;
    font-size: 15px;
    font-weight: bold;
}

.stat {
    flex: none;
    width: 31px;
    height: 29px;
    display: flex;
    align-items: center;
    justify-content: center;
}

.stat.div {
    width: 32px;
    border-left: 1px solid #808080;
}

.stat-drop {
    flex: none;
    width: 17px;
    height: 29px;
}

.stat-drop::before {
    content: "";
    display: block;
    width: 0;
    margin: auto;
    border: 5px solid transparent;
    border-top-color: #f4f4f4;
    border-bottom: none;
}

.scale {
    padding-left: 4px;
}

.customize {
    margin-left: auto;
    margin-right: -5px;
}

.bottom-edge {
    flex: none;
    height: 3px;
    background: linear-gradient(90deg, #1f1c20 913px, #4a4a4a 913px 1021px, #b06327 1021px 1130px, #1f1c20 1130px);
}

/* site logo over the corner */
.site-logo {
    position: absolute;
    right: 15px;
    bottom: 0;
    width: 422px;
    height: 211px;
    padding: 0 0 4px 38px;
    display: flex;
    align-items: center;
    background: #fefefe;
    color: #0c0c0c;
}

.site-name {
    display: flex;
    flex-direction: column;
    margin: 10px 0 0 -2px;
    white-space: nowrap;
}

.site-name strong {
    font-family: "Noto Sans CJK SC", sans-serif;
    font-size: 45px;
    font-weight: 900;
    font-style: italic;
    line-height: 42px;
}

.site-name em {
    font-size: 31px;
    font-weight: 500;
    line-height: 30px;
}
```
